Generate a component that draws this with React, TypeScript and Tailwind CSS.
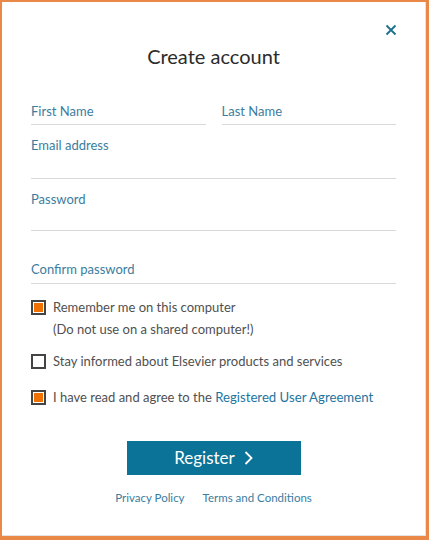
import React from "react"

function Field({ label, className = "", gap = "h-[4px]" }: { label: string; className?: string; gap?: string }) {
  return (
    <div className={`flex flex-col border-b border-[#d9d9d9] ${className}`}>
      <label className="text-[13px] leading-[18px] text-[#3b7d9e]">{label}</label>
      <div className={gap} />
    </div>
  )
}

function Check({ checked }: { checked: boolean }) {
  return (
    <span className="flex h-[15px] w-[15px] shrink-0 items-center justify-center border-2 border-[#444]">
      {checked && <span className="h-[9px] w-[9px] bg-[#f07100]" />}
    </span>
  )
}

export default function App() {
  return (
    <div className="h-[540px] w-[429px] border-b-[4px] border-l-2 border-r-[3px] border-t-2 border-[#ea8848] bg-white font-['Lato',sans-serif]">
      <div className="flex h-full flex-col border-b border-r border-[#e4e4e4] pl-[29px] pr-[29px]">
        <div className="flex justify-end pt-[22px]">
          <button aria-label="Close" className="mr-[-1px] text-[#1a6e8e]">
            <svg width="12" height="12" viewBox="0 0 12 12" fill="none" stroke="currentColor" strokeWidth="1.8">
              <path d="M1.5 1.5l9 9M10.5 1.5l-9 9" />
            </svg>
          </button>
        </div>
        <h1 className="mt-[8px] text-center text-[20px] leading-[24px] text-[#2b2b2b]">Create account</h1>

        <div className="mt-[34px] flex gap-4">
          <Field label="First Name" className="flex-1" />
          <Field label="Last Name" className="flex-1" />
        </div>
        <Field label="Email address" className="mt-[11px]" gap="h-[24px]" />
        <Field label="Password" className="mt-[11px]" gap="h-[22px]" />
        <Field label="Confirm password" className="mt-[29px]" gap="h-[5px]" />

        <div className="mt-[12px] flex flex-col text-[13px] leading-[22px] text-[#505050]">
          <div className="flex gap-[7px]">
            <span className="pt-[4px]">
              <Check checked />
            </span>
            <div>
              <div>Remember me on this computer</div>
              <div>(Do not use on a shared computer!)</div>
            </div>
          </div>
          <div className="mt-[10px] flex gap-[7px]">
            <span className="pt-[4px]">
              <Check checked={false} />
            </span>
            <span>Stay informed about Elsevier products and services</span>
          </div>
          <div className="mt-[14px] flex gap-[7px]">
            <span className="pt-[4px]">
              <Check checked />
            </span>
            <span>
              I have read and agree to the <a className="text-[13.2px] text-[#1d75a0]">Registered User Agreement</a>
            </span>
          </div>
        </div>

        <div className="mt-[33px] flex justify-center">
          <button className="flex h-[34px] w-[174px] items-center justify-center gap-[9px] bg-[#0c7398] text-[17px] text-white">
            Register
            <svg width="9" height="14" viewBox="0 0 9 14" fill="none" stroke="currentColor" strokeWidth="1.8">
              <path d="M1.5 1l6 6-6 6" />
            </svg>
          </button>
        </div>

        <div className="mt-[14px] flex justify-center gap-[18px] text-[11.5px] text-[#3a7d9f]">
          <a>Privacy Policy</a>
          <a>Terms and Conditions</a>
        </div>
      </div>
    </div>
  )
}
